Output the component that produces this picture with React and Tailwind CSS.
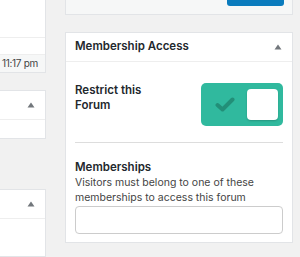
import React from 'react';

const Caret = () => (
  <svg width="8" height="6" viewBox="0 0 8 6" className="text-[#72777c]">
    <path d="M4 0.5 L7.5 5.5 L0.5 5.5 Z" fill="currentColor" />
  </svg>
);

const SidePanel = ({ className = '' }) => (
  <div className={`bg-white border border-[#e2e4e7] border-l-0 ${className}`}>
    <div className="h-[29px] flex items-center justify-end pr-[10px] border-b border-[#eeeeee]">
      <Caret />
    </div>
  </div>
);

const Toggle = () => (
  <div className="w-[82px] h-[43px] rounded-[5px] bg-[#30b99e] flex items-center justify-between pl-[14px] pr-[5px] shrink-0">
    <svg width="20" height="15" viewBox="0 0 20 15">
      <path d="M2.5 8 L7.5 12.5 L17.5 2.5" fill="none" stroke="#228f78" strokeWidth="4" strokeLinecap="round" strokeLinejoin="round" />
    </svg>
    <div className="w-[31px] h-[31px] rounded-[4px] bg-white shadow-[0_1px_2px_rgba(0,0,0,0.2)]" />
  </div>
);

export default function App() {
  return (
    <div
      className="w-[300px] h-[257px] bg-[#f1f1f1] flex overflow-hidden text-[#23282d]"
      style={{ fontFamily: 'Inter, "Noto Sans", sans-serif' }}
    >
      {/* left column */}
      <div className="w-[46px] shrink-0 flex flex-col">
        <div className="bg-white border-r border-b border-[#e2e4e7]">
          <div className="h-[38px] border-b border-[#eeeeee]" />
          <div className="h-[16px]" />
          <div className="h-[18px] bg-[#f6f7f7] border-t border-[#eeeeee] flex items-center justify-end pr-[7px] text-[10px] tracking-[-0.3px] text-[#444] whitespace-nowrap">
            11:17 pm
          </div>
        </div>
        <SidePanel className="mt-[17px] h-[58px]" />
        <SidePanel className="mt-[50px] h-[80px]" />
      </div>

      {/* right column */}
      <div className="w-[228px] ml-[19px] shrink-0 flex flex-col">
        <div className="h-[15px] bg-[#f6f7f7] border border-t-0 border-[#e2e4e7] flex justify-end pr-[8px]">
          <div className="w-[57px] h-[6px] bg-[#0a7bbd] rounded-b-[3px]" />
        </div>

        <div className="mt-[17px] h-[211px] bg-white border border-[#e2e4e7] flex flex-col">
          <div className="h-[29px] border-b border-[#eeeeee] flex items-center justify-between pl-[9px] pr-[10px]">
            <span className="text-[11.5px] font-semibold">Membership Access</span>
            <Caret />
          </div>

          <div className="px-[9px] flex flex-col">
            <div className="flex items-start justify-between pt-[21px]">
              <div className="text-[11.5px] font-semibold leading-[15px] w-[80px]">
                Restrict this Forum
              </div>
              <Toggle />
            </div>

            <div className="mt-[16px] border-t border-[#dddddd]" />

            <div className="mt-[17px] text-[11.5px] font-semibold leading-[15px]">Memberships</div>
            <div className="text-[10.5px] leading-[15px] text-[#444]">
              Visitors must belong to one of these memberships to access this forum
            </div>
            <div className="mt-[1px] h-[28px] rounded-[4px] border border-[#cccccc] bg-white" />
          </div>
        </div>
      </div>
    </div>
  );
}
